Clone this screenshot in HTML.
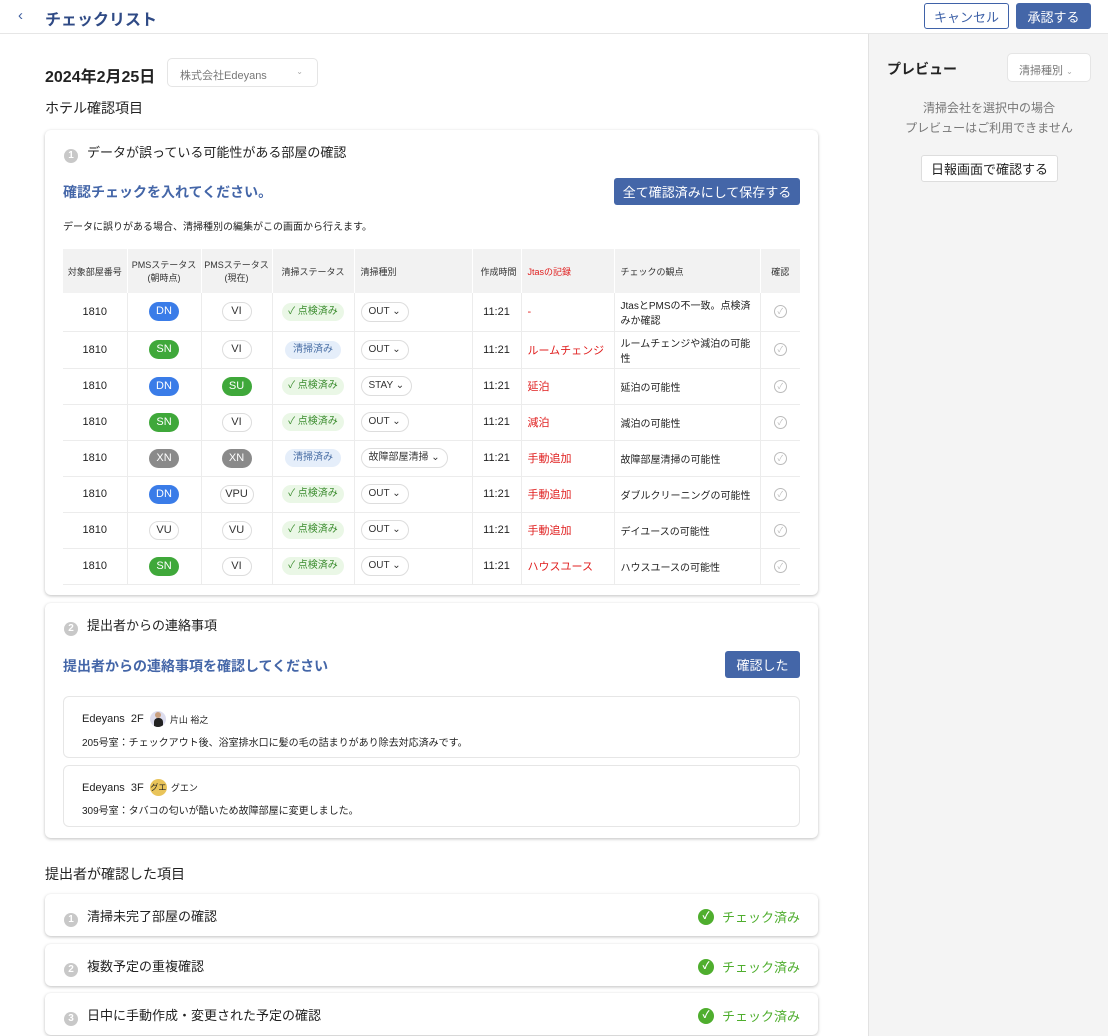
<!DOCTYPE html>
<html><head><meta charset="utf-8"><style>
*{box-sizing:border-box;margin:0;padding:0}
body{width:1108px;height:1036px;overflow:hidden;background:#fff;font-family:"Liberation Sans","Noto Sans CJK JP",sans-serif;color:#222;position:relative}
.abs{position:absolute}
.hdr{left:0;top:0;width:1108px;height:34px;border-bottom:1px solid #e6e6e6;background:#fff}
.side{left:868px;top:34px;width:240px;height:1002px;background:#f4f4f4;border-left:1px solid #e2e2e2}
.btn{position:absolute;font-size:13px;display:flex;align-items:center;justify-content:center;border-radius:3px}
.card{position:absolute;left:45px;width:773px;background:#fff;border-radius:6px;box-shadow:0 1px 3px rgba(0,0,0,.25)}
.num{display:inline-block;width:14px;height:14px;border-radius:50%;background:#c8c8c8;color:#fff;font-size:10px;text-align:center;line-height:14px;font-weight:bold;vertical-align:-1px;margin-right:9px}
table{border-collapse:collapse;table-layout:fixed;position:absolute;left:63px;top:249px;width:737px;font-size:11px}
th{background:#f2f2f2;font-weight:normal;font-size:9px;height:44px;color:#333;border-right:1px solid #fff}
td{height:36px;text-align:center;border-bottom:1px solid #ececec;border-right:1px solid #ececec;color:#222}
td:last-child,th:last-child{border-right:none}
.p{display:inline-block;width:30px;height:19px;line-height:19px;border-radius:10px;font-size:11px;color:#fff}
.b{background:#3a7ce8}.g{background:#3fa83a}.x{background:#8a8a8a}
.w{background:#fff;color:#333;border:1px solid #ddd;line-height:17px}
.ok{display:inline-block;background:#eaf7e6;color:#3b8c2e;border-radius:10px;padding:0 6px;height:18px;line-height:18px;font-size:10px}
.cl{display:inline-block;background:#e5eefa;color:#4a6fa5;border-radius:10px;padding:0 8px;height:18px;line-height:18px;font-size:10px}
.sel{display:inline-block;border:1px solid #ddd;border-radius:10px;padding:0 7px;height:20px;line-height:18px;font-size:10px;color:#333}
.l{text-align:left;padding-left:6px}
.red{color:#e02020}
.ck{display:inline-block;width:13px;height:13px;border:1px solid #bbb;border-radius:50%;color:#bbb;font-size:8px;line-height:11px}
.done{position:absolute;right:18px;top:13px;color:#4fae2e;font-size:13px;display:flex;align-items:center}
.done i{display:inline-block;width:16px;height:16px;border-radius:50%;background:#4fae2e;color:#fff;font-size:10px;text-align:center;line-height:16px;font-style:normal;margin-right:8px;font-weight:bold}
.msg{position:absolute;left:18px;width:737px;border:1px solid #e6e6e6;border-radius:6px;font-size:10px}
</style></head><body>
<div class="abs hdr">
 <div class="abs" style="left:18px;top:7px;font-size:15px;color:#3f5fa0">‹</div>
 <div class="abs" style="left:45px;top:6px;font-size:16px;font-weight:bold;color:#2f4a85">チェックリスト</div>
 <div class="btn" style="left:924px;top:3px;width:85px;height:26px;border:1px solid #3f62a8;color:#3f62a8;background:#fff">キャンセル</div>
 <div class="btn" style="left:1016px;top:3px;width:75px;height:26px;background:#4466a8;color:#fff">承認する</div>
</div>
<div class="abs side">
 <div class="abs" style="left:18px;top:25px;font-size:14px;font-weight:bold">プレビュー</div>
 <div class="abs" style="left:138px;top:19px;width:84px;height:29px;background:#fff;border:1px solid #e5e5e5;border-radius:5px;font-size:11px;color:#777;padding:8px 0 0 11px">清掃種別 <span style="font-size:8px;color:#aaa">⌄</span></div>
 <div class="abs" style="left:0;top:64px;width:240px;text-align:center;font-size:12px;color:#777;line-height:20px">清掃会社を選択中の場合<br>プレビューはご利用できません</div>
 <div class="btn" style="left:52px;top:121px;width:137px;height:27px;background:#fff;border:1px solid #ddd;color:#222">日報画面で確認する</div>
</div>
<div class="abs" style="left:45px;top:63px;font-size:16px;font-weight:bold">2024年2月25日</div>
<div class="abs" style="left:167px;top:58px;width:151px;height:29px;border:1px solid #e5e5e5;border-radius:5px;font-size:11px;color:#777;padding:8px 0 0 12px">株式会社Edeyans<span style="position:absolute;right:14px;font-size:8px;color:#aaa">⌄</span></div>
<div class="abs" style="left:45px;top:98px;font-size:14px">ホテル確認項目</div>

<div class="card" style="top:130px;height:465px">
 <div class="abs" style="left:19px;top:12px;font-size:13px"><span class="num">1</span>データが誤っている可能性がある部屋の確認</div>
 <div class="abs" style="left:18px;top:52px;font-size:14px;font-weight:bold;color:#4466a8">確認チェックを入れてください。</div>
 <div class="btn" style="left:569px;top:48px;width:186px;height:27px;background:#4466a8;color:#fff">全て確認済みにして保存する</div>
 <div class="abs" style="left:18px;top:88px;font-size:10px">データに誤りがある場合、清掃種別の編集がこの画面から行えます。</div>
</div>
<table>
<colgroup><col style="width:64px"><col style="width:74px"><col style="width:71px"><col style="width:82px"><col style="width:118px"><col style="width:49px"><col style="width:93px"><col style="width:146px"><col style="width:40px"></colgroup>
<tr><th>対象部屋番号</th><th>PMSステータス<br>(朝時点)</th><th>PMSステータス<br>(現在)</th><th>清掃ステータス</th><th class="l">清掃種別</th><th style="text-align:right;padding-right:4px">作成時間</th><th class="l red">Jtasの記録</th><th class="l">チェックの観点</th><th>確認</th></tr>
<tr style="height:38px"><td>1810</td><td><span class="p b">DN</span></td><td><span class="p w">VI</span></td><td><span class="ok">✓ 点検済み</span></td><td class="l"><span class="sel">OUT ⌄</span></td><td>11:21</td><td class="l red">-</td><td class="l" style="font-size:10px">JtasとPMSの不一致。点検済みか確認</td><td><span class="ck">✓</span></td></tr>
<tr style="height:37px"><td>1810</td><td><span class="p g">SN</span></td><td><span class="p w">VI</span></td><td><span class="cl">清掃済み</span></td><td class="l"><span class="sel">OUT ⌄</span></td><td>11:21</td><td class="l red">ルームチェンジ</td><td class="l" style="font-size:10px">ルームチェンジや減泊の可能性</td><td><span class="ck">✓</span></td></tr>
<tr><td>1810</td><td><span class="p b">DN</span></td><td><span class="p g">SU</span></td><td><span class="ok">✓ 点検済み</span></td><td class="l"><span class="sel">STAY ⌄</span></td><td>11:21</td><td class="l red">延泊</td><td class="l" style="font-size:10px">延泊の可能性</td><td><span class="ck">✓</span></td></tr>
<tr><td>1810</td><td><span class="p g">SN</span></td><td><span class="p w">VI</span></td><td><span class="ok">✓ 点検済み</span></td><td class="l"><span class="sel">OUT ⌄</span></td><td>11:21</td><td class="l red">減泊</td><td class="l" style="font-size:10px">減泊の可能性</td><td><span class="ck">✓</span></td></tr>
<tr><td>1810</td><td><span class="p x">XN</span></td><td><span class="p x">XN</span></td><td><span class="cl">清掃済み</span></td><td class="l"><span class="sel">故障部屋清掃 ⌄</span></td><td>11:21</td><td class="l red">手動追加</td><td class="l" style="font-size:10px">故障部屋清掃の可能性</td><td><span class="ck">✓</span></td></tr>
<tr><td>1810</td><td><span class="p b">DN</span></td><td><span class="p w" style="width:34px">VPU</span></td><td><span class="ok">✓ 点検済み</span></td><td class="l"><span class="sel">OUT ⌄</span></td><td>11:21</td><td class="l red">手動追加</td><td class="l" style="font-size:10px">ダブルクリーニングの可能性</td><td><span class="ck">✓</span></td></tr>
<tr><td>1810</td><td><span class="p w">VU</span></td><td><span class="p w">VU</span></td><td><span class="ok">✓ 点検済み</span></td><td class="l"><span class="sel">OUT ⌄</span></td><td>11:21</td><td class="l red">手動追加</td><td class="l" style="font-size:10px">デイユースの可能性</td><td><span class="ck">✓</span></td></tr>
<tr><td>1810</td><td><span class="p g">SN</span></td><td><span class="p w">VI</span></td><td><span class="ok">✓ 点検済み</span></td><td class="l"><span class="sel">OUT ⌄</span></td><td>11:21</td><td class="l red">ハウスユース</td><td class="l" style="font-size:10px">ハウスユースの可能性</td><td><span class="ck">✓</span></td></tr>
</table>

<div class="card" style="top:603px;height:235px">
 <div class="abs" style="left:19px;top:12px;font-size:13px"><span class="num">2</span>提出者からの連絡事項</div>
 <div class="abs" style="left:18px;top:53px;font-size:14px;font-weight:bold;color:#4466a8">提出者からの連絡事項を確認してください</div>
 <div class="btn" style="left:680px;top:48px;width:75px;height:27px;background:#4466a8;color:#fff">確認した</div>
 <div class="msg" style="top:93px;height:62px">
  <div class="abs" style="left:18px;top:14px;font-size:11px;display:flex;align-items:center">Edeyans&nbsp;&nbsp;2F&nbsp;&nbsp;<span style="display:inline-block;width:16px;height:16px;border-radius:50%;background:#dde;margin-right:4px;position:relative;overflow:hidden"><span style="position:absolute;left:4px;top:7px;width:9px;height:10px;background:#222;border-radius:4px 4px 0 0"></span><span style="position:absolute;left:5px;top:1px;width:6px;height:6px;background:#c9a07f;border-radius:50%"></span></span><span style="font-size:9px">片山 裕之</span></div>
  <div class="abs" style="left:18px;top:37px">205号室：チェックアウト後、浴室排水口に髪の毛の詰まりがあり除去対応済みです。</div>
 </div>
 <div class="msg" style="top:162px;height:62px">
  <div class="abs" style="left:18px;top:13px;font-size:11px;display:flex;align-items:center">Edeyans&nbsp;&nbsp;3F&nbsp;&nbsp;<span style="display:inline-block;width:17px;height:17px;border-radius:50%;background:#e9c45a;font-size:8px;text-align:center;line-height:17px;margin-right:4px">グエ</span><span style="font-size:9px">グエン</span></div>
  <div class="abs" style="left:18px;top:36px">309号室：タバコの匂いが酷いため故障部屋に変更しました。</div>
 </div>
</div>

<div class="abs" style="left:45px;top:864px;font-size:14px">提出者が確認した項目</div>
<div class="card" style="top:894px;height:42px"><div class="abs" style="left:19px;top:12px;font-size:13px"><span class="num">1</span>清掃未完了部屋の確認</div><div class="done"><i>✓</i>チェック済み</div></div>
<div class="card" style="top:944px;height:42px"><div class="abs" style="left:19px;top:12px;font-size:13px"><span class="num">2</span>複数予定の重複確認</div><div class="done"><i>✓</i>チェック済み</div></div>
<div class="card" style="top:993px;height:42px"><div class="abs" style="left:19px;top:12px;font-size:13px"><span class="num">3</span>日中に手動作成・変更された予定の確認</div><div class="done"><i>✓</i>チェック済み</div></div>
</body></html>
